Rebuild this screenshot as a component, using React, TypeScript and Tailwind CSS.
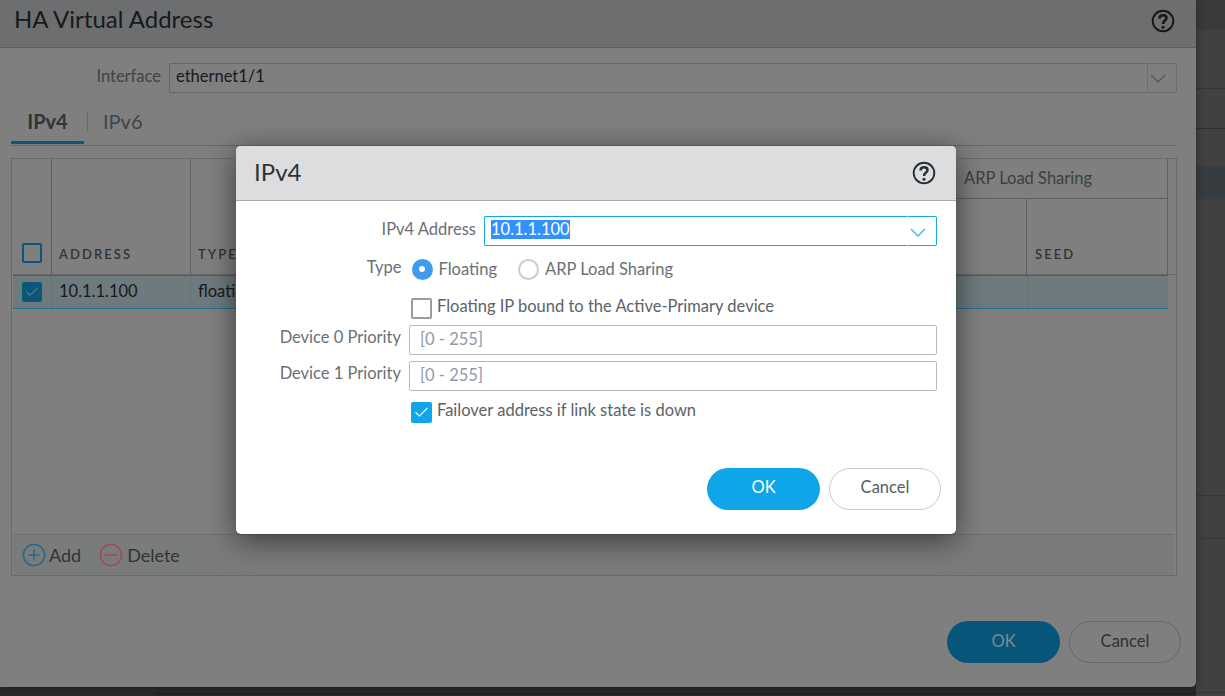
import { Check } from 'lucide-react';

function HelpIcon({ className }: { className: string }) {
  return (
    <svg viewBox="0 0 24 24" className={className} fill="none">
      <circle cx="12" cy="12" r="10.3" stroke="currentColor" strokeWidth="1.9" />
      <path
        d="M8.5 9.5c.1-2.1 1.5-3.3 3.6-3.3 2 0 3.4 1.2 3.4 2.9 0 1.3-.7 2-1.7 2.7-1 .7-1.6 1.2-1.6 2.4v.7"
        stroke="currentColor"
        strokeWidth="2.5"
      />
      <circle cx="12" cy="18.2" r="1.5" fill="currentColor" />
    </svg>
  );
}

function SelectChevron({ className }: { className: string }) {
  return (
    <svg viewBox="0 0 16 9" className={`h-[9px] w-[16px] ${className}`} fill="none">
      <path d="M1 1l7 7 7-7" stroke="currentColor" strokeWidth="1.5" />
    </svg>
  );
}

function CircleAction({ color, plus }: { color: string; plus?: boolean }) {
  return (
    <svg viewBox="0 0 24 24" className="h-[24px] w-[24px]" fill="none" stroke={color}>
      <circle cx="12" cy="12" r="10.6" strokeWidth="1.5" />
      <path d={plus ? 'M12 6.5v11M6.5 12h11' : 'M5.5 12h13'} strokeWidth="1.5" />
    </svg>
  );
}

function CheckBox({ checked, dark }: { checked?: boolean; dark?: boolean }) {
  if (dark) {
    return (
      <div
        className={`flex h-[20px] w-[20px] items-center justify-center rounded-[2px] border-2 border-[#0a5779] ${
          checked ? 'bg-[#0a5779]' : ''
        }`}
      >
        {checked && <Check className="h-[16px] w-[16px] text-[#7f8f96]" strokeWidth={1.5} />}
      </div>
    );
  }
  return (
    <div
      className={`flex h-[21px] w-[21px] items-center justify-center rounded-[2px] border-2 ${
        checked ? 'border-[#12a5e8] bg-[#12a5e8]' : 'border-[#9b9da0] bg-white'
      }`}
    >
      {checked && <Check className="h-[17px] w-[17px] text-white" strokeWidth={1.5} />}
    </div>
  );
}

function PriorityRow({ label }: { label: string }) {
  return (
    <div className="flex h-[36px] items-start">
      <div className="w-[157px] pt-[1px] text-right text-[16.5px] leading-[22px] text-[#6a7075]">{label}</div>
      <div className="ml-[8px] flex h-[30px] w-[528px] items-center rounded-[2px] border border-[#b9bcbf] pb-[2px] pl-[10px] text-[16.5px] text-[#8d9aa5]">
        [0 - 255]
      </div>
    </div>
  );
}

function InnerDialog() {
  return (
    <div className="absolute left-[236px] top-[146px] h-[388px] w-[720px] overflow-hidden rounded-[5px] bg-white shadow-[0_6px_30px_rgba(0,0,0,0.55)]">
      <div className="flex h-[55px] items-center justify-between border-b border-[#a9abad] bg-[#dcddde] pb-[2px] pl-[18px] pr-[20px]">
        <span className="text-[24px] text-[#2f3338]">IPv4</span>
        <HelpIcon className="mt-[2px] h-[24px] w-[24px] text-[#2b2e31]" />
      </div>
      <div className="pl-[8px] pt-[15px] text-[16.5px]">
        <div className="flex h-[30px] items-center">
          <div className="w-[232px] pb-[4px] text-right text-[#6a7075]">IPv4 Address</div>
          <div className="ml-[8px] flex h-[30px] w-[423px] items-center rounded-l-[2px] border border-r-0 border-[#12a5e8] pb-[3px] pl-[6px]">
            <span className="bg-[#3390ff] leading-[19px] text-white">10.1.1.100</span>
          </div>
          <div className="flex h-[30px] w-[30px] items-center justify-center rounded-r-[2px] border border-[#12a5e8] border-l-white pr-[8px] pt-[2px]">
            <SelectChevron className="text-[#4db8ec]" />
          </div>
        </div>
        <div className="mt-[8px] flex h-[30px] items-center">
          <div className="w-[157.5px] pb-[4px] text-right text-[#6a7075]">Type</div>
          <div className="ml-[10px] flex h-[21px] w-[21px] items-center justify-center rounded-full bg-[#3d9bf2]">
            <div className="h-[6px] w-[6px] rounded-full bg-white" />
          </div>
          <span className="ml-[6px] text-[#6a7075]">Floating</span>
          <div className="ml-[21px] h-[21px] w-[21px] rounded-full border-2 border-[#c9cbcd]" />
          <span className="ml-[6px] text-[#6a7075]">ARP Load Sharing</span>
        </div>
        <div className="mt-[8px] flex h-[30px] items-center pl-[167px]">
          <div className="pt-[3px]">
            <CheckBox />
          </div>
          <span className="ml-[5px] pb-[1px] text-[#5c6267]">Floating IP bound to the Active-Primary device</span>
        </div>
        <div className="mt-[3px]">
          <PriorityRow label="Device 0 Priority" />
          <PriorityRow label="Device 1 Priority" />
        </div>
        <div className="flex h-[30px] items-center pl-[167px]">
          <div className="pt-[1px]">
            <CheckBox checked />
          </div>
          <span className="ml-[5px] pb-[3px] text-[#5c6267]">Failover address if link state is down</span>
        </div>
        <div className="mt-[41px] flex justify-end gap-[9px] pr-[15px]">
          <button className="h-[42px] w-[113px] rounded-full bg-[#0ea5e9] pb-[4px] text-white">OK</button>
          <button className="h-[42px] w-[112px] rounded-full border border-[#c9cbcd] pb-[4px] text-[#555b60]">
            Cancel
          </button>
        </div>
      </div>
    </div>
  );
}

function OuterDialog() {
  return (
    <div className="relative flex h-[687px] w-[1196px] flex-col overflow-hidden rounded-br-[5px] bg-[#7f7f7f] text-[16.5px] shadow-[0_0_10px_rgba(0,0,0,0.35)]">
      <div className="flex h-[48px] shrink-0 items-center justify-between border-b border-[#5d5e5f] bg-[#6d6e70] pb-[10px] pl-[14px] pr-[21px]">
        <span className="text-[24px] text-[#17191b]">HA Virtual Address</span>
        <HelpIcon className="mt-[4px] h-[24px] w-[24px] text-[#151617]" />
      </div>
      <div className="flex-1 px-[11px]">
        <div className="mt-[15px] flex h-[30px] items-center pr-[8px]">
          <div className="w-[150px] pb-[4px] text-right text-[#3f4346]">Interface</div>
          <div className="ml-[8px] flex h-[30px] flex-1 items-center rounded-l-[2px] border border-r-0 border-[#656667] pb-[3px] pl-[6px] text-[#17191b]">
            ethernet1/1
          </div>
          <div className="flex h-[30px] w-[30px] items-center justify-center rounded-r-[2px] border border-[#6b6c6d] pr-[8px] pt-[1px]">
            <SelectChevron className="text-[#585a5c]" />
          </div>
        </div>
        <div className="mr-[8px] mt-[14px] flex h-[39px] items-start border-b border-[#656667]">
          <div className="flex h-[37px] w-[73px] items-center justify-center border-b-[3px] border-[#0a5779] pb-[7px] text-[20px] font-bold text-[#303438]">
            IPv4
          </div>
          <div className="ml-[3px] mt-[5px] h-[19px] w-px bg-[#666768]" />
          <span className="ml-[15px] -mt-[1px] text-[20px] text-[#3f4449]">IPv6</span>
        </div>
        <div className="mr-[8px] mt-[12px] flex h-[418px] flex-col border border-[#6a6b6c] pl-[1px] pr-[1px]">
          <div className="flex h-[116px] shrink-0 border-b border-[#656667] text-[13px] font-semibold tracking-[0.16em] text-[#303438]">
            <div className="flex w-[39px] items-end justify-center border-r border-[#5f6061] pb-[11px]">
              <CheckBox dark />
            </div>
            <div className="flex w-[139px] items-end border-r border-[#5f6061] pb-[10px] pl-[7px]">ADDRESS</div>
            <div className="flex flex-1 items-end pb-[10px] pl-[7px]">TYPE</div>
            <div className="mr-[7px] flex w-[218px] flex-col border-l border-r border-[#5f6061]">
              <div className="flex h-[40px] items-center border-b border-[#5f6061] pl-[13px] text-[16.5px] font-normal tracking-normal text-[#3a3f44]">
                ARP Load Sharing
              </div>
              <div className="flex flex-1">
                <div className="w-[76px] border-r border-[#5f6061]" />
                <div className="flex flex-1 items-end pb-[10px] pl-[8px]">SEED</div>
              </div>
            </div>
          </div>
          <div className="mr-[7px] flex h-[34px] shrink-0 border-b border-t border-[#1f6f90] bg-[#6e7a7e] text-[#17191b]">
            <div className="flex w-[39px] items-center justify-center border-r border-[#667276]">
              <CheckBox dark checked />
            </div>
            <div className="flex w-[139px] items-center border-r border-[#667276] pb-[2px] pl-[7px]">10.1.1.100</div>
            <div className="flex flex-1 items-center pb-[2px] pl-[7px]">floating</div>
            <div className="w-[141px] border-l border-[#667276]" />
          </div>
          <div className="flex-1" />
          <div className="mr-[1px] flex h-[41px] shrink-0 items-center border-t border-[#6d6e6e] bg-[#7a7c7b] pl-[9px] text-[18px] text-[#303336]">
            <CircleAction color="#24688a" plus />
            <span className="ml-[3px]">Add</span>
            <span className="ml-[18px] flex items-center">
              <CircleAction color="#a34a4f" />
              <span className="ml-[4px]">Delete</span>
            </span>
          </div>
        </div>
        <div className="mt-[45px] flex justify-end gap-[9px] pr-[4px]">
          <button className="h-[42px] w-[113px] rounded-full bg-[#07567a] pb-[2px] text-[#7f8a8f]">OK</button>
          <button className="h-[42px] w-[112px] rounded-full border border-[#666768] pb-[2px] text-[#2f3235]">
            Cancel
          </button>
        </div>
      </div>
    </div>
  );
}

function BackdropRows() {
  return (
    <div className="flex h-[696px] w-[29px] flex-col bg-[#414141]">
      <div className="h-[30px] bg-[#3a3a3a]" />
      <div className="h-[59px] border-b border-[#343434]" />
      <div className="h-[40px] border-b border-[#303030]" />
      <div className="h-[36px]" />
      <div className="h-[35px] border-b border-t border-[#2c4652] bg-[#363c40]" />
      <div className="h-[296px] border-b border-[#363636]" />
      <div className="h-[43px] border-b border-[#383838]" />
      <div className="h-[154px] border-b border-[#383838]" />
      <div className="flex-1" />
    </div>
  );
}

export default function App() {
  return (
    <div className="relative flex h-[696px] w-[1225px] overflow-hidden bg-[#414141] font-['Lato',sans-serif]">
      <div className="flex h-[696px] w-[1196px] shrink-0 flex-col bg-[#2b2b2b]">
        <OuterDialog />
        <div className="ml-[156px] mt-[6px] h-[3px] border-l border-t border-[#1f1f1f]" />
      </div>
      <BackdropRows />
      <InnerDialog />
    </div>
  );
}
